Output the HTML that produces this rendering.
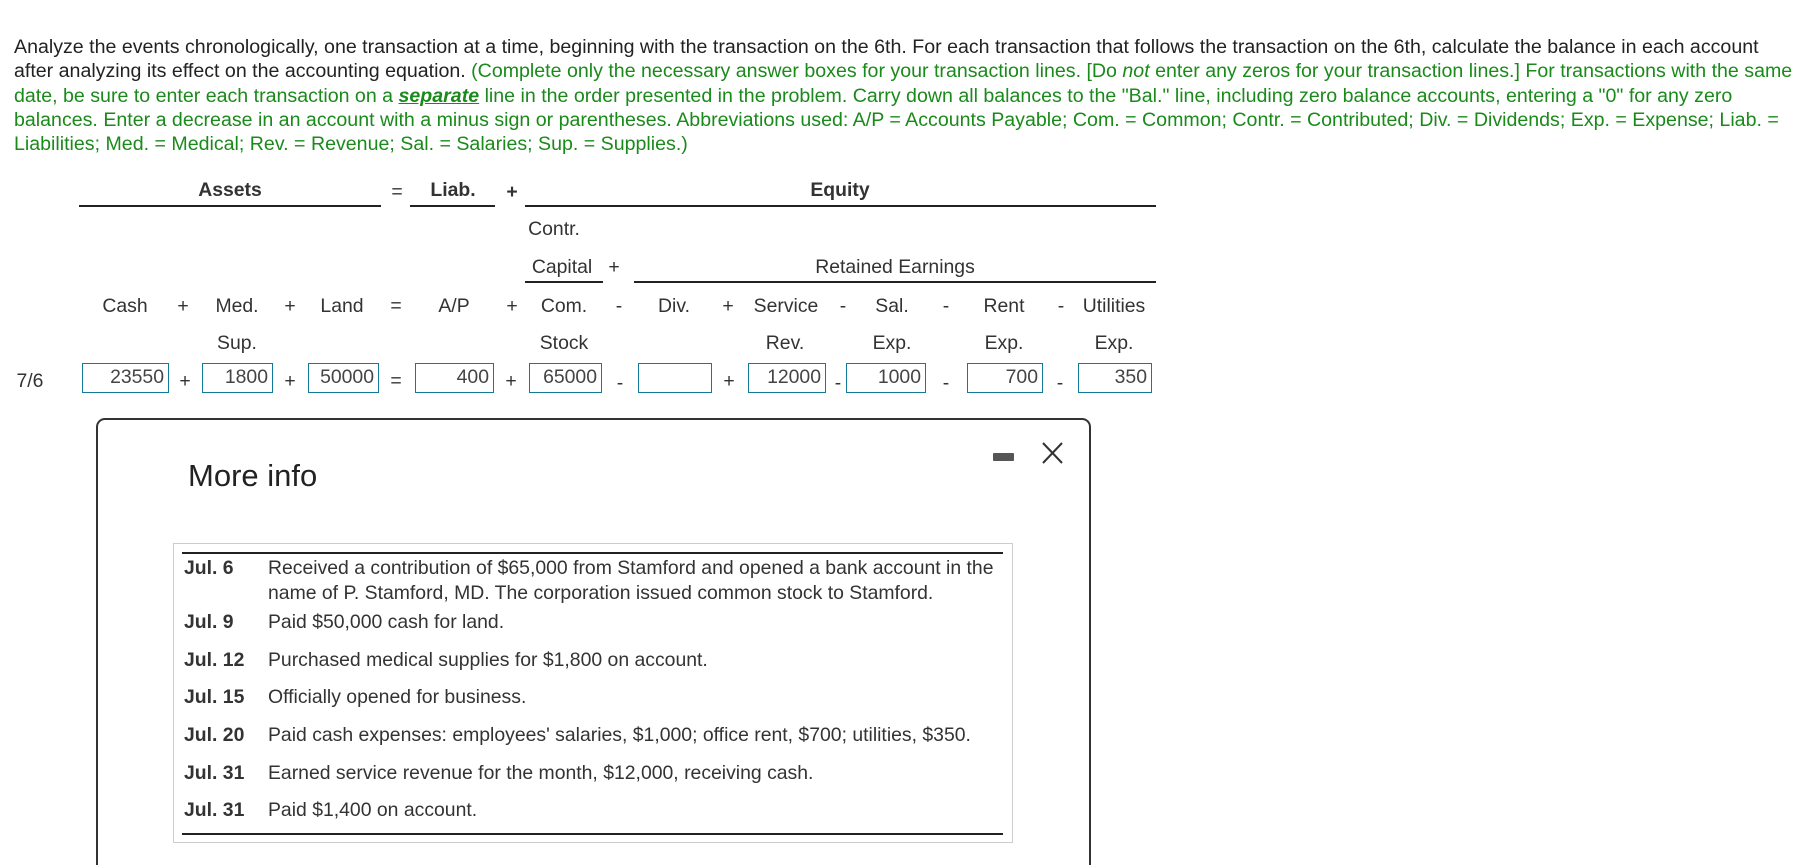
<!DOCTYPE html>
<html><head><meta charset="utf-8"><style>
*{margin:0;padding:0;box-sizing:border-box}
html,body{width:1795px;height:865px;overflow:hidden}
body{background:#fff;font-family:"Liberation Sans",Arial,sans-serif;color:#333;position:relative}
.p{position:absolute;left:14px;top:35px;width:1781px;font-size:19.6px;line-height:24.3px;color:#222}
.g{color:#1a8a1a}
.a{position:absolute;font-size:19.4px;line-height:20px;white-space:nowrap;transform:translate(-50%,-50%)}
.b{font-weight:bold}
.l{position:absolute;height:1.5px;background:#222}
.box{position:absolute;top:363px;height:30px;border:1.5px solid #137b99;font-size:19.4px;line-height:27px;text-align:right;padding-right:4px;color:#444}
.modal{position:absolute;left:96px;top:418px;width:995px;height:447px;border:2.5px solid #333;border-bottom:none;border-radius:9px 9px 0 0;background:#fff}
.t{position:absolute;font-size:19.4px;white-space:nowrap;color:#333}
</style></head><body>
<div class="p">Analyze the events chronologically, one transaction at a time, beginning with the transaction on the 6th. For each transaction that follows the transaction on the 6th, calculate the balance in each account after analyzing its effect on the accounting equation. <span class="g">(Complete only the necessary answer boxes for your transaction lines. [Do <i>not</i> enter any zeros for your transaction lines.] For transactions with the same date, be sure to enter each transaction on a <b><i><u>separate</u></i></b> line in the order presented in the problem. Carry down all balances to the "Bal." line, including zero balance accounts, entering a "0" for any zero balances. Enter a decrease in an account with a minus sign or parentheses. Abbreviations used: A/P = Accounts Payable; Com. = Common; Contr. = Contributed; Div. = Dividends; Exp. = Expense; Liab. = Liabilities; Med. = Medical; Rev. = Revenue; Sal. = Salaries; Sup. = Supplies.)</span></div>

<div class="a b" style="left:230px;top:190px">Assets</div>
<div class="l" style="left:79px;width:302px;top:205px"></div>
<div class="a" style="left:397px;top:192px">=</div>
<div class="a b" style="left:453px;top:190px">Liab.</div>
<div class="l" style="left:410px;width:85px;top:205px"></div>
<div class="a b" style="left:512px;top:192px">+</div>
<div class="a b" style="left:840px;top:190px">Equity</div>
<div class="l" style="left:525px;width:631px;top:205px"></div>
<div class="a" style="left:554px;top:229px">Contr.</div>
<div class="a" style="left:562px;top:267px">Capital</div>
<div class="l" style="left:525px;width:78px;top:281px"></div>
<div class="a" style="left:614px;top:267px">+</div>
<div class="a" style="left:895px;top:267px">Retained Earnings</div>
<div class="l" style="left:634px;width:522px;top:281px"></div>

<div class="a" style="left:125px;top:306px">Cash</div>
<div class="a" style="left:183px;top:306px">+</div>
<div class="a" style="left:237px;top:306px">Med.</div>
<div class="a" style="left:290px;top:306px">+</div>
<div class="a" style="left:342px;top:306px">Land</div>
<div class="a" style="left:396px;top:306px">=</div>
<div class="a" style="left:454px;top:306px">A/P</div>
<div class="a" style="left:512px;top:306px">+</div>
<div class="a" style="left:564px;top:306px">Com.</div>
<div class="a" style="left:619px;top:306px">-</div>
<div class="a" style="left:674px;top:306px">Div.</div>
<div class="a" style="left:728px;top:306px">+</div>
<div class="a" style="left:786px;top:306px">Service</div>
<div class="a" style="left:843px;top:306px">-</div>
<div class="a" style="left:892px;top:306px">Sal.</div>
<div class="a" style="left:946px;top:306px">-</div>
<div class="a" style="left:1004px;top:306px">Rent</div>
<div class="a" style="left:1061px;top:306px">-</div>
<div class="a" style="left:1114px;top:306px">Utilities</div>

<div class="a" style="left:237px;top:343px">Sup.</div>
<div class="a" style="left:564px;top:343px">Stock</div>
<div class="a" style="left:785px;top:343px">Rev.</div>
<div class="a" style="left:892px;top:343px">Exp.</div>
<div class="a" style="left:1004px;top:343px">Exp.</div>
<div class="a" style="left:1114px;top:343px">Exp.</div>

<div class="a" style="left:30px;top:381px">7/6</div>
<div class="box" style="left:82px;width:87px">23550</div>
<div class="a" style="left:185px;top:381px">+</div>
<div class="box" style="left:202px;width:71px">1800</div>
<div class="a" style="left:290px;top:381px">+</div>
<div class="box" style="left:308px;width:71px">50000</div>
<div class="a" style="left:396px;top:381px">=</div>
<div class="box" style="left:415px;width:79px">400</div>
<div class="a" style="left:511px;top:381px">+</div>
<div class="box" style="left:529px;width:73px">65000</div>
<div class="a" style="left:620px;top:383px">-</div>
<div class="box" style="left:638px;width:74px"></div>
<div class="a" style="left:729px;top:381px">+</div>
<div class="box" style="left:748px;width:78px">12000</div>
<div class="a" style="left:838px;top:383px">-</div>
<div class="box" style="left:846px;width:80px">1000</div>
<div class="a" style="left:946px;top:383px">-</div>
<div class="box" style="left:967px;width:76px">700</div>
<div class="a" style="left:1060px;top:383px">-</div>
<div class="box" style="left:1078px;width:74px">350</div>

<div class="modal"></div>
<div class="t" style="left:188px;top:458px;font-size:31px;color:#222">More info</div>
<div style="position:absolute;left:993px;top:453px;width:21px;height:8px;background:#555;border-radius:1px"></div>
<svg style="position:absolute;left:1040px;top:441px" width="26" height="24"><path d="M3 2 L22 22 M22 2 L3 22" stroke="#333" stroke-width="2"/></svg>

<div style="position:absolute;left:173px;top:543px;width:840px;height:300px;border:1.5px solid #ccc"></div>
<div class="l" style="left:182px;width:821px;top:552px"></div>
<div class="l" style="left:182px;width:821px;top:833px"></div>
<div class="t b" style="left:184px;top:557px">Jul. 6</div>
<div class="t" style="left:268px;top:557px">Received a contribution of $65,000 from Stamford and opened a bank account in the</div>
<div class="t" style="left:268px;top:582px">name of P. Stamford, MD. The corporation issued common stock to Stamford.</div>
<div class="t b" style="left:184px;top:611px">Jul. 9</div>
<div class="t" style="left:268px;top:611px">Paid $50,000 cash for land.</div>
<div class="t b" style="left:184px;top:649px">Jul. 12</div>
<div class="t" style="left:268px;top:649px">Purchased medical supplies for $1,800 on account.</div>
<div class="t b" style="left:184px;top:686px">Jul. 15</div>
<div class="t" style="left:268px;top:686px">Officially opened for business.</div>
<div class="t b" style="left:184px;top:724px">Jul. 20</div>
<div class="t" style="left:268px;top:724px">Paid cash expenses: employees' salaries, $1,000; office rent, $700; utilities, $350.</div>
<div class="t b" style="left:184px;top:762px">Jul. 31</div>
<div class="t" style="left:268px;top:762px">Earned service revenue for the month, $12,000, receiving cash.</div>
<div class="t b" style="left:184px;top:799px">Jul. 31</div>
<div class="t" style="left:268px;top:799px">Paid $1,400 on account.</div>
</body></html>
